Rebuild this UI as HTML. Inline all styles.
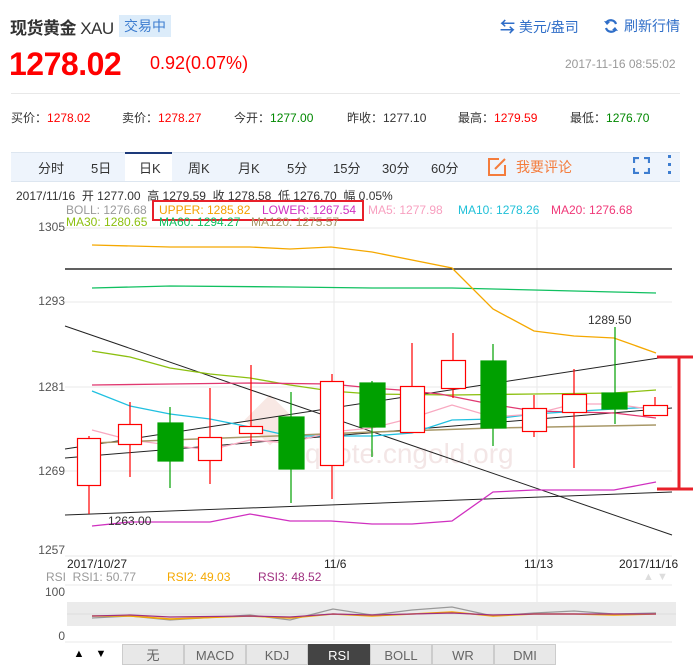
<!DOCTYPE html>
<html><head><meta charset="utf-8"><style>
body{margin:0;width:693px;height:665px;background:#fff;overflow:hidden;position:relative;font-family:"Liberation Sans","Noto Sans CJK SC",sans-serif;}
.a{position:absolute;white-space:nowrap;}
.y{position:absolute;left:20px;width:45px;text-align:right;font-size:12px;color:#555}
</style></head><body>
<div class="a" style="left:10px;top:14px;font-size:17px;color:#333;letter-spacing:-0.5px"><b>现货黄金</b> XAU</div>
<div class="a" style="left:119px;top:15px;width:52px;height:22px;background:#dcecfa;color:#3d7dd0;font-size:14px;line-height:22px;text-align:center">交易中</div>
<div class="a" style="left:500px;top:16px;font-size:14px;color:#2f6ec8"><b style="font-size:15px">⇆</b> 美元/盎司</div>
<svg class="a" style="left:603px;top:18px" width="16" height="16" viewBox="0 0 16 16"><path d="M13 6A5.5 5.5 0 0 0 3 5M3 10a5.5 5.5 0 0 0 10 1" fill="none" stroke="#2f6ec8" stroke-width="2.2"/><path d="M1 3l3 4 3-3zM15 13l-3-4-3 3z" fill="#2f6ec8"/></svg>
<div class="a" style="left:624px;top:16px;font-size:14px;color:#2f6ec8">刷新行情</div>
<div class="a" style="left:9px;top:46px;font-size:32px;font-weight:bold;color:#f00;letter-spacing:-0.5px">1278.02</div>
<div class="a" style="left:150px;top:53px;font-size:18px;color:#f00">0.92(0.07%)</div>
<div class="a" style="left:565px;top:57px;font-size:12px;color:#999">2017-11-16 08:55:02</div>
<div class="a" style="left:11px;top:93px;width:669px;height:1px;background:#e8e8e8"></div>
<div class="a" style="left:11px;top:109px;font-size:12px;color:#333">买价：<span style="color:#f00">1278.02</span></div>
<div class="a" style="left:122px;top:109px;font-size:12px;color:#333">卖价：<span style="color:#f00">1278.27</span></div>
<div class="a" style="left:234px;top:109px;font-size:12px;color:#333">今开：<span style="color:#080">1277.00</span></div>
<div class="a" style="left:347px;top:109px;font-size:12px;color:#333">昨收：1277.10</div>
<div class="a" style="left:458px;top:109px;font-size:12px;color:#333">最高：<span style="color:#f00">1279.59</span></div>
<div class="a" style="left:570px;top:109px;font-size:12px;color:#333">最低：<span style="color:#080">1276.70</span></div>
<div class="a" style="left:11px;top:152px;width:669px;height:28px;background:#eef4fc;border-top:1px solid #dde6f0;border-bottom:1px solid #dde6f0"></div>
<div class="a" style="left:125px;top:152px;width:47px;height:29px;background:#fff;border-top:2px solid #1d3a7a;box-sizing:border-box"></div>
<div class="a" style="left:0;top:158px;font-size:13px;color:#333">
<span class="a" style="left:38px">分时</span><span class="a" style="left:91px">5日</span><span class="a" style="left:139px">日K</span><span class="a" style="left:188px">周K</span><span class="a" style="left:238px">月K</span><span class="a" style="left:287px">5分</span><span class="a" style="left:333px">15分</span><span class="a" style="left:382px">30分</span><span class="a" style="left:431px">60分</span></div>
<svg class="a" style="left:487px;top:156px" width="21" height="21" viewBox="0 0 21 21"><path d="M12 3H2v16h16V9" fill="none" stroke="#f47c3c" stroke-width="2"/><path d="M8 13L18 3" stroke="#f47c3c" stroke-width="2"/></svg>
<div class="a" style="left:516px;top:157px;font-size:14px;color:#f47c3c">我要评论</div>
<svg class="a" style="left:633px;top:157px" width="17" height="17" viewBox="0 0 17 17"><path d="M1 6V1h5M11 1h5v5M16 11v5h-5M6 16H1v-5" fill="none" stroke="#3d7dd0" stroke-width="2.2"/></svg>
<div class="a" style="left:668px;top:155px;width:3px;height:19px;background:linear-gradient(#3d7dd0 0 3px,transparent 3px 8px,#3d7dd0 8px 11px,transparent 11px 16px,#3d7dd0 16px 19px)"></div>
<div class="a" style="left:16px;top:187px;font-size:12px;color:#333">2017/11/16&nbsp; 开 1277.00&nbsp; 高 1279.59&nbsp; 收 1278.58&nbsp; 低 1276.70&nbsp; 幅 0.05%</div>
<div class="a" style="left:66px;top:203px;font-size:12px;color:#999">BOLL: 1276.68</div>
<div class="a" style="left:152px;top:200px;width:208px;height:17px;border:2px solid #e8202a"></div>
<div class="a" style="left:159px;top:203px;font-size:12px;color:#f5a000">UPPER: 1285.82</div>
<div class="a" style="left:262px;top:203px;font-size:12px;color:#d030c0">LOWER: 1267.54</div>
<div class="a" style="left:368px;top:203px;font-size:12px;color:#f8a0c0">MA5: 1277.98</div>
<div class="a" style="left:458px;top:203px;font-size:12px;color:#20c0d8">MA10: 1278.26</div>
<div class="a" style="left:551px;top:203px;font-size:12px;color:#f03878">MA20: 1276.68</div>
<div class="a" style="left:66px;top:215px;font-size:12px;color:#8cc010">MA30: 1280.65</div>
<div class="a" style="left:159px;top:215px;font-size:12px;color:#10c060">MA60: 1294.27</div>
<div class="a" style="left:251px;top:215px;font-size:12px;color:#a89868">MA120: 1275.57</div>
<div class="y" style="top:220px">1305</div>
<div class="y" style="top:294px">1293</div>
<div class="y" style="top:380px">1281</div>
<div class="y" style="top:464px">1269</div>
<div class="y" style="top:543px">1257</div>
<svg class="a" style="left:0;top:0" width="693" height="665">
<g stroke="#eaeaea" stroke-width="1"><line x1="65" y1="228" x2="672" y2="228"/><line x1="65" y1="302" x2="672" y2="302"/><line x1="65" y1="387" x2="672" y2="387"/><line x1="65" y1="471" x2="672" y2="471"/><line x1="65" y1="556" x2="672" y2="556"/><line x1="334" y1="220" x2="334" y2="640"/><line x1="537" y1="220" x2="537" y2="640"/><line x1="65" y1="585" x2="672" y2="585"/><line x1="65" y1="642" x2="672" y2="642"/></g>
<text x="305" y="463" font-size="28" fill="#f3e6e6" font-family="Liberation Sans">quote.cngold.org</text>
<rect x="252" y="402" width="36" height="36" fill="#f8e8e4" transform="rotate(45 270 420)"/>
<polyline fill="none" stroke="#000" stroke-width="1.2" points="65,269 672,269"/>
<polyline fill="none" stroke="#222" points="65,326 672,535"/>
<polyline fill="none" stroke="#222" points="65,449 672,356"/>
<polyline fill="none" stroke="#222" points="65,458 672,408"/>
<polyline fill="none" stroke="#222" points="65,515 672,492"/>
<polyline fill="none" stroke="#10c060" stroke-width="1.3" points="92,288 170,286 290,287 372,288 452,288 534,290 614,292 656,293"/>
<polyline fill="none" stroke="#f5a800" stroke-width="1.3" points="92,245 170,247 250,247 290,249 331,247 372,252 452,268 493,309 534,331 574,336 614,338 656,353"/>
<polyline fill="none" stroke="#d030c0" stroke-width="1.3" points="92,526 130,522 210,522 250,514 290,521 331,521 372,524 412,524 452,521 493,492 534,490 614,490 656,482"/>
<polyline fill="none" stroke="#8cc010" stroke-width="1.3" points="92,351 130,357 170,368 210,374 250,378 290,385 331,391 372,394 452,395 534,394 614,393 656,390"/>
<polyline fill="none" stroke="#e03870" stroke-width="1.3" points="92,385 170,384 250,383 331,384 372,388 400,390 440,394 490,404 534,411 614,413 656,418"/>
<polyline fill="none" stroke="#20c0e0" stroke-width="1.3" points="92,391 130,406 170,414 210,419 250,427 290,436 372,436 412,433 452,420 493,419 534,414 614,409 656,407"/>
<polyline fill="none" stroke="#f8a8c0" stroke-width="1.3" points="92,430 130,440 170,445 210,450 250,440 290,443 331,432 372,428 412,418 452,405 493,417 534,414 574,404 614,404 656,410"/>
<polyline fill="none" stroke="#a89868" stroke-width="1.5" points="92,443 250,437 372,432 493,428 656,425"/>
<g stroke="#f00" fill="#fff" stroke-width="1.2">
<line x1="89" y1="436" x2="89" y2="514"/><rect x="77.5" y="438.5" width="23" height="47"/>
<line x1="130" y1="402" x2="130" y2="477"/><rect x="118.5" y="424.5" width="23" height="20"/>
<line x1="210" y1="388" x2="210" y2="484"/><rect x="198.5" y="437.5" width="23" height="23"/>
<line x1="251" y1="365" x2="251" y2="446"/><rect x="239.5" y="426.5" width="23" height="7"/>
<line x1="332" y1="374" x2="332" y2="499"/><rect x="320.5" y="381.5" width="23" height="84"/>
<line x1="412" y1="343" x2="412" y2="432"/><rect x="400.5" y="386.5" width="24" height="46"/>
<line x1="453" y1="333" x2="453" y2="398"/><rect x="441.5" y="360.5" width="24" height="28"/>
<line x1="534" y1="395" x2="534" y2="437"/><rect x="522.5" y="408.5" width="24" height="23"/>
<line x1="574" y1="369" x2="574" y2="468"/><rect x="562.5" y="394.5" width="24" height="18"/>
<line x1="655" y1="397" x2="655" y2="415"/><rect x="643.5" y="405.5" width="24" height="10"/>
</g>
<g stroke="#00a000" fill="#00a000" stroke-width="1.2">
<line x1="170" y1="407" x2="170" y2="488"/><rect x="158" y="423" width="25" height="38"/>
<line x1="291" y1="392" x2="291" y2="503"/><rect x="279" y="417" width="25" height="52"/>
<line x1="372" y1="381" x2="372" y2="457"/><rect x="360" y="383" width="25" height="44"/>
<line x1="493" y1="344" x2="493" y2="446"/><rect x="481" y="361" width="25" height="67"/>
<line x1="615" y1="327" x2="615" y2="424"/><rect x="602" y="393" width="25" height="16"/>
</g>
<g stroke="#e8202a" stroke-width="3"><line x1="679" y1="357" x2="679" y2="489"/><line x1="657" y1="357" x2="693" y2="357"/><line x1="657" y1="489" x2="693" y2="489"/></g>
<text x="108" y="525" font-size="12" fill="#333" font-family="Liberation Sans">1263.00</text>
<text x="588" y="324" font-size="12" fill="#333" font-family="Liberation Sans">1289.50</text>
<rect x="67" y="602" width="609" height="24" fill="#ebebeb"/>
<line x1="67" y1="614" x2="676" y2="614" stroke="#ddd"/>
<polyline fill="none" stroke="#999" stroke-width="1.2" points="92,618 130,616 170,620 250,615 290,620 333,609 372,615 412,610 452,607 493,616 534,613 574,611 614,614 656,613"/>
<polyline fill="none" stroke="#f5a800" stroke-width="1.5" points="92,616 130,616 170,619 250,616 290,618 333,614 372,616 412,614 452,612 493,616 534,614 574,614 614,615 656,614"/>
<polyline fill="none" stroke="#a03080" stroke-width="1.2" points="92,616 130,615 170,617 250,616 290,617 333,614 372,615 412,614 452,613 493,615 534,614 574,614 614,614 656,614"/>
</svg>
<div class="a" style="left:67px;top:557px;font-size:12px;color:#222">2017/10/27</div>
<div class="a" style="left:324px;top:557px;font-size:12px;color:#222">11/6</div>
<div class="a" style="left:524px;top:557px;font-size:12px;color:#222">11/13</div>
<div class="a" style="left:619px;top:557px;font-size:12px;color:#222">2017/11/16</div>
<div class="a" style="left:46px;top:570px;font-size:12px;color:#999">RSI&nbsp; RSI1: 50.77</div>
<div class="a" style="left:167px;top:570px;font-size:12px;color:#f5a800">RSI2: 49.03</div>
<div class="a" style="left:258px;top:570px;font-size:12px;color:#a03080">RSI3: 48.52</div>
<div class="a" style="left:643px;top:571px;font-size:11px;color:#ddd">▲ ▼</div>
<div class="y" style="top:585px">100</div>
<div class="y" style="top:629px">0</div>
<div class="a" style="left:69px;top:644px;width:20px;height:21px;font-size:11px;line-height:21px;text-align:center;color:#000">▲</div>
<div class="a" style="left:91px;top:644px;width:20px;height:21px;font-size:11px;line-height:21px;text-align:center;color:#000">▼</div>
<div class="a" style="left:122px;top:644px;height:21px;font-size:13px;line-height:21px;color:#666;display:flex">
<span style="width:60px;background:#e8e8e8;border:1px solid #ccc;text-align:center">无</span><span style="width:60px;background:#e8e8e8;border:1px solid #ccc;text-align:center">MACD</span><span style="width:60px;background:#e8e8e8;border:1px solid #ccc;text-align:center">KDJ</span><span style="width:60px;background:#444;color:#fff;border:1px solid #444;text-align:center">RSI</span><span style="width:60px;background:#e8e8e8;border:1px solid #ccc;text-align:center">BOLL</span><span style="width:60px;background:#e8e8e8;border:1px solid #ccc;text-align:center">WR</span><span style="width:60px;background:#e8e8e8;border:1px solid #ccc;text-align:center">DMI</span></div>
</body></html>
